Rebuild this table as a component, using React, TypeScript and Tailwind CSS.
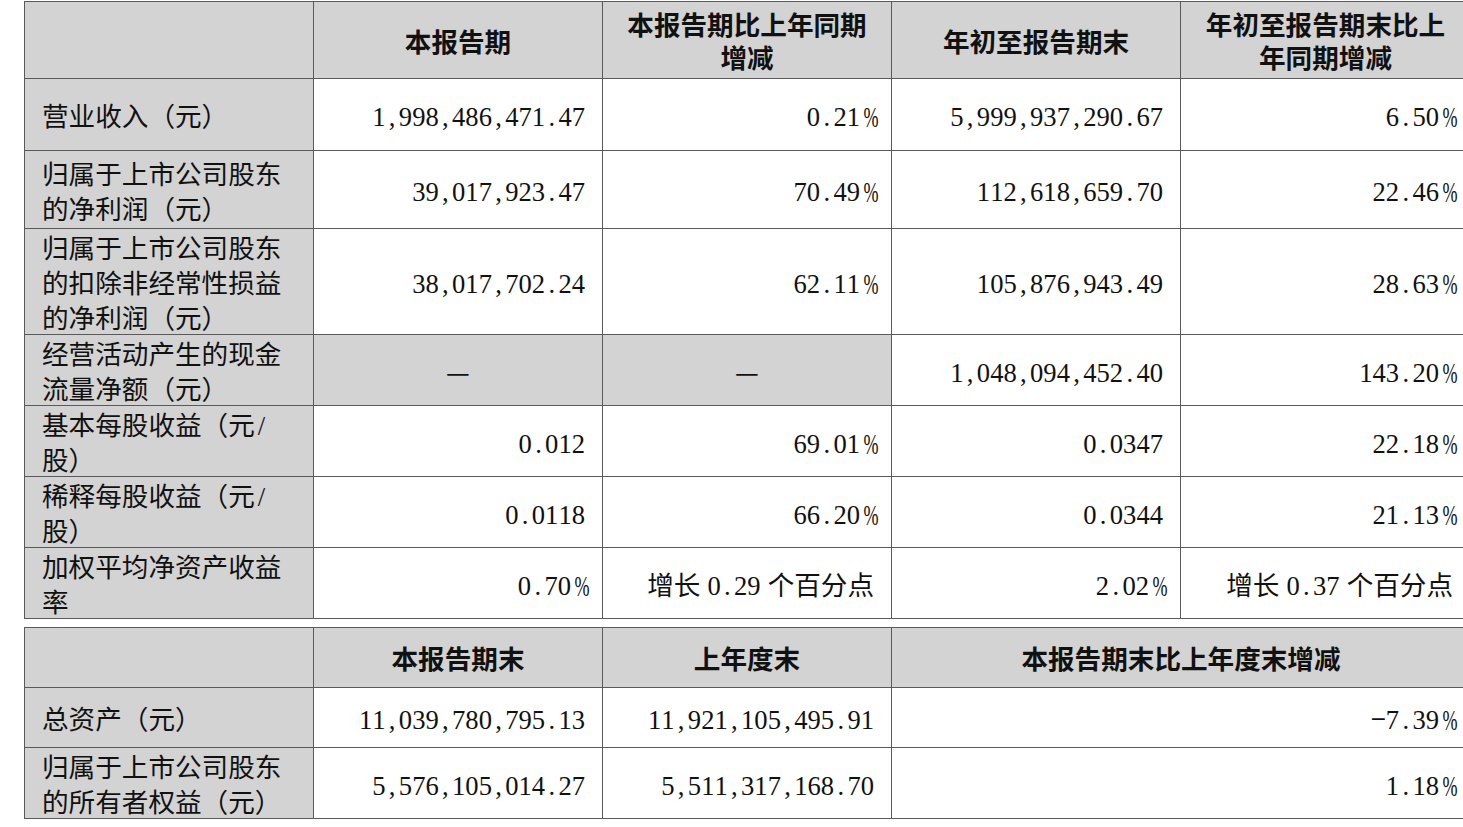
const cjk = "font-['Noto_Sans_CJK_SC',sans-serif]";

// SimSun-style half-width latin: each ascii char gets a fixed half-em slot
const T = ({ s }: { s: string }) => (
  <>
    {[...s].map((c, i) => {
      if (c === " ") return <span key={i} className="inline-block w-[7px]"></span>;
      if (c === "%")
        return (
          <span key={i} className="inline-block w-[14px] text-center font-['Liberation_Serif',serif]">
            <span className="inline-block scale-x-[0.68] scale-y-[1.08] origin-center">%</span>
          </span>
        );
      return c.charCodeAt(0) < 128 ? (
        <span key={i} className="inline-block w-[13.3px] text-center font-['Liberation_Serif',serif]">
          {c}
        </span>
      ) : (
        <span key={i}>{c}</span>
      );
    })}
  </>
);

const cell = "border border-[#5a5a5a] px-[17px] align-middle";
const gray = "bg-[#d3d3d3]";

type Row = {
  label: string[];
  h: number;
  vals: string[];
  grayCols?: number[];
};

const rows: Row[] = [
  { label: ["营业收入（元）"], h: 72, vals: ["1,998,486,471.47", "0.21%", "5,999,937,290.67", "6.50%"] },
  { label: ["归属于上市公司股东", "的净利润（元）"], h: 78, vals: ["39,017,923.47", "70.49%", "112,618,659.70", "22.46%"] },
  {
    label: ["归属于上市公司股东", "的扣除非经常性损益", "的净利润（元）"],
    h: 106,
    vals: ["38,017,702.24", "62.11%", "105,876,943.49", "28.63%"],
  },
  {
    label: ["经营活动产生的现金", "流量净额（元）"],
    h: 69,
    vals: ["—", "—", "1,048,094,452.40", "143.20%"],
    grayCols: [0, 1],
  },
  { label: ["基本每股收益（元/", "股）"], h: 71, vals: ["0.012", "69.01%", "0.0347", "22.18%"] },
  { label: ["稀释每股收益（元/", "股）"], h: 71, vals: ["0.0118", "66.20%", "0.0344", "21.13%"] },
  { label: ["加权平均净资产收益", "率"], h: 69, vals: ["0.70%", "增长 0.29 个百分点", "2.02%", "增长 0.37 个百分点"] },
];

const Line = ({ s }: { s: string }) => (
  <div className="h-[35px] whitespace-nowrap">
    <T s={s} />
  </div>
);

const Label = ({ lines }: { lines: string[] }) => (
  <>
    {lines.map((l, i) => (
      <Line key={i} s={l} />
    ))}
  </>
);

const HeadLines = ({ lines }: { lines: string[] }) => (
  <>
    {lines.map((l, i) => (
      <div key={i} className="h-[33px] leading-[33px] whitespace-nowrap">
        {l}
      </div>
    ))}
  </>
);

export default function App() {
  return (
    <div className={`w-[1463px] h-[827px] overflow-hidden bg-white text-[#111] ${cjk} text-[26.6px] leading-[35px]`}>
      <div className="pl-[24px] pt-[1px]">
        <table className="table-fixed border-collapse w-[1446px]">
          <colgroup>
            <col className="w-[289px]" />
            <col className="w-[289px]" />
            <col className="w-[289px]" />
            <col className="w-[289px]" />
            <col className="w-[290px]" />
          </colgroup>
          <thead>
            <tr className={`h-[77px] ${gray}`}>
              <th className={cell}></th>
              <th className={`${cell} text-center font-bold`}>
                <HeadLines lines={["本报告期"]} />
              </th>
              <th className={`${cell} text-center font-bold`}>
                <HeadLines lines={["本报告期比上年同期", "增减"]} />
              </th>
              <th className={`${cell} text-center font-bold`}>
                <HeadLines lines={["年初至报告期末"]} />
              </th>
              <th className={`${cell} text-center font-bold`}>
                <HeadLines lines={["年初至报告期末比上", "年同期增减"]} />
              </th>
            </tr>
          </thead>
          <tbody>
            {rows.map((r, i) => (
              <tr key={i} style={{ height: r.h }}>
                <td className={`${cell} ${gray} text-left`}>
                  <Label lines={r.label} />
                </td>
                {r.vals.map((v, j) =>
                  r.grayCols?.includes(j) ? (
                    <td key={j} className={`${cell} ${gray} text-center`}>
                      <div className="h-[35px]">{v}</div>
                    </td>
                  ) : (
                    <td key={j} className={`${cell} text-right`}>
                      <Line s={v} />
                    </td>
                  )
                )}
              </tr>
            ))}
          </tbody>
        </table>

        <table className="table-fixed border-collapse w-[1446px] mt-[8px]">
          <colgroup>
            <col className="w-[289px]" />
            <col className="w-[289px]" />
            <col className="w-[289px]" />
            <col className="w-[579px]" />
          </colgroup>
          <thead>
            <tr className={`h-[60px] ${gray}`}>
              <th className={cell}></th>
              <th className={`${cell} text-center font-bold`}>
                <HeadLines lines={["本报告期末"]} />
              </th>
              <th className={`${cell} text-center font-bold`}>
                <HeadLines lines={["上年度末"]} />
              </th>
              <th className={`${cell} text-center font-bold`}>
                <HeadLines lines={["本报告期末比上年度末增减"]} />
              </th>
            </tr>
          </thead>
          <tbody>
            <tr className="h-[60px]">
              <td className={`${cell} ${gray}`}>
                <Label lines={["总资产（元）"]} />
              </td>
              <td className={`${cell} text-right`}>
                <Line s="11,039,780,795.13" />
              </td>
              <td className={`${cell} text-right`}>
                <Line s="11,921,105,495.91" />
              </td>
              <td className={`${cell} text-right`}>
                <Line s="−7.39%" />
              </td>
            </tr>
            <tr className="h-[68px]">
              <td className={`${cell} ${gray}`}>
                <Label lines={["归属于上市公司股东", "的所有者权益（元）"]} />
              </td>
              <td className={`${cell} text-right`}>
                <Line s="5,576,105,014.27" />
              </td>
              <td className={`${cell} text-right`}>
                <Line s="5,511,317,168.70" />
              </td>
              <td className={`${cell} text-right`}>
                <Line s="1.18%" />
              </td>
            </tr>
          </tbody>
        </table>
      </div>
    </div>
  );
}
